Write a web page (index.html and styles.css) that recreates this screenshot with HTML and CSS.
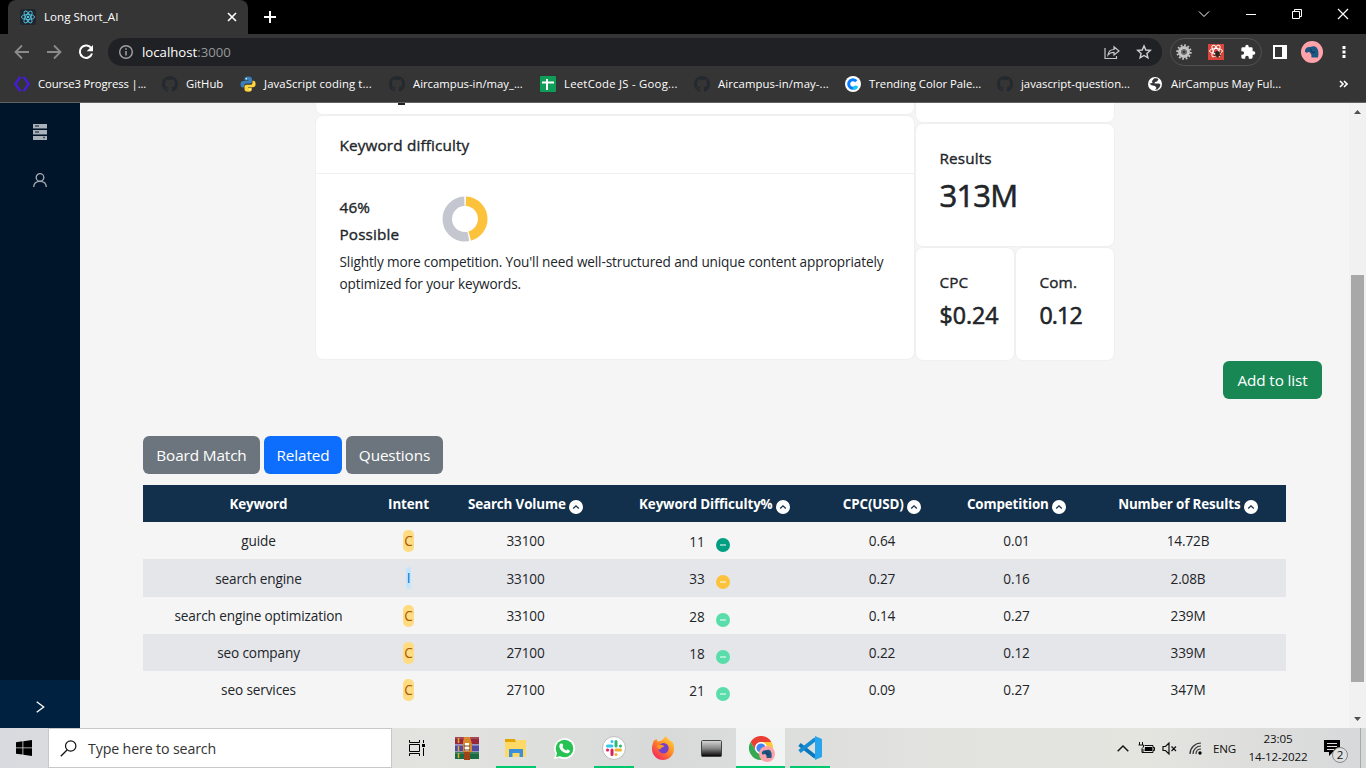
FILE: index.html
```html
<!DOCTYPE html>
<html lang="en">
<head>
<meta charset="utf-8">
<title>Long Short_AI</title>
<link rel="stylesheet" href="styles.css">
</head>
<body>
<svg class="defs" width="0" height="0">
  <symbol id="github" viewBox="0 0 16 16"><path fill="#24292f" d="M8 0C3.58 0 0 3.58 0 8c0 3.54 2.29 6.53 5.47 7.59.4.07.55-.17.55-.38 0-.19-.01-.82-.01-1.49-2.01.37-2.53-.49-2.69-.94-.09-.23-.48-.94-.82-1.13-.28-.15-.68-.52-.01-.53.63-.01 1.08.58 1.23.82.72 1.21 1.87.87 2.33.66.07-.52.28-.87.51-1.07-1.78-.2-3.64-.89-3.64-3.95 0-.87.31-1.59.82-2.15-.08-.2-.36-1.02.08-2.12 0 0 .67-.21 2.2.82.64-.18 1.32-.27 2-.27s1.36.09 2 .27c1.53-1.04 2.2-.82 2.2-.82.44 1.1.16 1.92.08 2.12.51.56.82 1.27.82 2.15 0 3.07-1.87 3.75-3.65 3.95.29.25.54.73.54 1.48 0 1.07-.01 1.93-.01 2.2 0 .21.15.46.55.38A8.01 8.01 0 0 0 16 8c0-4.42-3.58-8-8-8z"/></symbol>
  <symbol id="up" viewBox="0 0 14 14"><circle cx="7" cy="7" r="7" fill="#fff"/><path d="M4.2 8.4 7 5.800l2.800 2.600" fill="none" stroke="#12304b" stroke-width="1.300"/></symbol>
  <symbol id="dot" viewBox="0 0 14 14"><circle cx="7" cy="7" r="7" fill="currentColor"/><path d="M4 7h6" stroke="#fff" stroke-opacity=".5" stroke-width="2"/></symbol>
  <symbol id="elephant" viewBox="0 0 22 22"><circle cx="11" cy="11" r="11" fill="#ffa3aa"/><path d="M4 9.500C4.500 6.500 7 5.500 9.300 6c2.500-1.300 5.500-.8 6.800 1.200 1.500 2.200 1.700 5.300.9 9.300h-6.500l-.2-3-1.500-2c-1-.8-1.800-.6-2.600.2-1.500.3-2.400-.7-2.200-2.200z" fill="#1c5784"/><path d="M9 7.500c1.500 1.200 1 3 3 4.300l2-1" stroke="#142c49" fill="none"/></symbol>
</svg>

<header class="chrome">
  <div class="tabstrip">
    <div class="tab">
      <svg width="16" height="16" viewBox="0 0 16 16"><rect width="16" height="16" rx="2" fill="#20262e"/><g fill="none" stroke="#53c1de" stroke-width=".9"><ellipse cx="8" cy="8" rx="6.600" ry="2.500"/><ellipse cx="8" cy="8" rx="6.600" ry="2.500" transform="rotate(60 8 8)"/><ellipse cx="8" cy="8" rx="6.600" ry="2.500" transform="rotate(120 8 8)"/></g><circle cx="8" cy="8" r="1.300" fill="#53c1de"/></svg>
      <span class="tab-title">Long Short_AI</span>
      <svg width="10" height="10" viewBox="0 0 10 10"><path d="M1 1l8 8M9 1L1 9" stroke="#fff" stroke-width="1.600"/></svg>
    </div>
    <svg class="newtab" width="12" height="12" viewBox="0 0 12 12"><path d="M6 0v12M0 6h12" stroke="#fff" stroke-width="2"/></svg>
    <div class="winctl">
      <svg width="12" height="12" viewBox="0 0 12 12"><path d="M1 3.500l5 5 5-5" fill="none" stroke="#fff"/></svg>
      <svg width="10" height="12" viewBox="0 0 10 12"><path d="M0 6.500h10" stroke="#fff"/></svg>
      <svg width="10" height="12" viewBox="0 0 10 12"><path d="M.5 3.500h7v7h-7zM2.500 3.500v-2h7v7h-2" fill="none" stroke="#fff"/></svg>
      <svg width="12" height="12" viewBox="0 0 12 12"><path d="M1 1l10 10M11 1L1 11" stroke="#fff" stroke-width="1.200"/></svg>
    </div>
  </div>
  <div class="toolbar">
    <svg width="16" height="16" viewBox="0 0 16 16"><path d="M15 8H2M8 1.500L1.500 8 8 14.500" fill="none" stroke="#8b8b8b" stroke-width="1.800"/></svg>
    <svg width="16" height="16" viewBox="0 0 16 16"><path d="M1 8h13M8 1.500L14.500 8 8 14.500" fill="none" stroke="#8b8b8b" stroke-width="1.800"/></svg>
    <svg width="16" height="16" viewBox="0 0 16 16"><path d="M13.400 4.500A6.200 6.200 0 1 0 14 9.500" fill="none" stroke="#fff" stroke-width="2"/><path d="M15 1v6.300H8.700z" fill="#fff"/></svg>
    <div class="omnibox">
      <svg width="14" height="14" viewBox="0 0 14 14"><circle cx="7" cy="7" r="6.300" fill="none" stroke="#a0a3a7" stroke-width="1.400"/><path d="M7 6v4.500M7 3.300v1.500" stroke="#a0a3a7" stroke-width="1.500"/></svg>
      <span class="url">localhost<i>:3000</i></span>
      <svg class="share" width="16" height="16" viewBox="0 0 16 16"><path d="M1 4v10.500h11.500V12M4 11c.5-4 3-5.500 6-5.500V2.700L15 7l-5 4V8.300C7.500 8.300 5.500 9 4 11z" fill="none" stroke="#c4c6c8" stroke-width="1.200"/></svg>
      <svg width="16" height="16" viewBox="0 0 16 16"><path d="M8 1.900l1.800 4.100 4.500.4-3.400 3 1 4.400L8 11.500l-3.900 2.300 1-4.400-3.400-3 4.500-.4z" fill="none" stroke="#d0d1d3" stroke-width="1.400"/></svg>
    </div>
    <div class="extensions">
      <svg width="16" height="16" viewBox="0 0 16 16"><circle cx="8" cy="8" r="6.700" fill="none" stroke="#c4c4c4" stroke-width="2" stroke-dasharray="1.750 1.750"/><circle cx="8" cy="8" r="4.400" fill="none" stroke="#c4c4c4" stroke-width="3.200"/><circle cx="8" cy="8" r="2" fill="none" stroke="#808080"/></svg>
      <svg width="16" height="16" viewBox="0 0 16 16"><path fill="#db4437" d="M0 0h16v16H0z"/><g fill="none" stroke="#fff"><ellipse cx="8" cy="7" rx="6.500" ry="2.500"/><ellipse cx="8" cy="7" rx="6.500" ry="2.500" transform="rotate(60 8 7)"/><ellipse cx="8" cy="7" rx="6.500" ry="2.500" transform="rotate(120 8 7)"/></g><ellipse cx="9.500" cy="10" rx="2.300" ry="3" fill="#33231f"/><path d="M6 8l7 4M6 12l7-4M9 7l1 7" stroke="#33231f"/></svg>
      <svg width="16" height="16" viewBox="0 0 24 24"><path fill="#fff" d="M20.500 11H19V7a2 2 0 0 0-2-2h-4V3.500a2.500 2.500 0 0 0-5 0V5H4a2 2 0 0 0-2 2v3.800h1.500a2.700 2.700 0 0 1 0 5.400H2V20a2 2 0 0 0 2 2h3.800v-1.500a2.700 2.700 0 0 1 5.400 0V22H17a2 2 0 0 0 2-2v-4h1.500a2.500 2.500 0 0 0 0-5z"/></svg>
    </div>
    <svg class="panel" width="14" height="14" viewBox="0 0 14 14"><path d="M1 1h12v12H1z" fill="none" stroke="#fff" stroke-width="2"/><path d="M9 1h4v12H9z" fill="#fff"/></svg>
    <svg class="avatar" width="22" height="22"><use href="#elephant"/></svg>
    <svg width="4" height="14" viewBox="0 0 4 14"><path d="M.5 1h3v3h-3zM.5 5.500h3v3h-3zM.5 10h3v3h-3z" fill="#fff"/></svg>
  </div>
  <nav class="bookmarks">
    <a class="bm w148"><svg width="16" height="16" viewBox="0 0 16 16"><path d="M6.500.8L1.200 8l5.300 7.200M9.500.8L14.800 8l-5.300 7.200" fill="none" stroke="#471bdc" stroke-width="2.300"/></svg><span class="tight">Course3 Progress |...</span></a>
    <a class="bm w78"><svg width="16" height="16"><use href="#github"/></svg>GitHub</a>
    <a class="bm w149"><svg width="16" height="16" viewBox="0 0 16 16"><path fill="#3b7fb8" d="M8 .5C5 .5 4.500 1.500 4.500 3v1.500H8.300V5H3C1.200 5 .5 6.500.5 8.300c0 2 .8 3.200 2.300 3.200h1.500V9.800c0-1.400 1-2.300 2.300-2.300H10c1.200 0 2-.8 2-2V3C12 1.300 10.500.5 8 .5z"/><path fill="#ffd43b" d="M8.300 15.700c3 0 3.500-1 3.500-2.500v-1.500H8V11.200h5c1.800 0 2.600-1.300 2.600-3.200 0-2-.8-3.200-2.300-3.200H12.500v1.700c0 1.400-1 2.300-2.300 2.300H6.500c-1.200 0-2 .8-2 2v2.400c0 1.700 1.300 2.500 3.800 2.500z"/><circle cx="6.300" cy="2.700" r=".8" fill="#fff"/><circle cx="10" cy="13.500" r=".8" fill="#fff"/></svg><span class="loose">JavaScript coding t...</span></a>
    <a class="bm w151"><svg width="16" height="16"><use href="#github"/></svg>Aircampus-in/may_...</a>
    <a class="bm w154"><svg width="16" height="16" viewBox="0 0 16 16"><rect width="16" height="16" rx="1" fill="#0f9d58"/><path d="M2 6.500h12M7 3v11" stroke="#fff" stroke-width="2"/></svg><span class="looser">LeetCode JS - Goog...</span></a>
    <a class="bm w151"><svg width="16" height="16"><use href="#github"/></svg><span class="loose">Aircampus-in/may-...</span></a>
    <a class="bm w152"><svg width="16" height="16" viewBox="0 0 16 16"><circle cx="8" cy="8" r="8" fill="#fff"/><path d="M11.300 5.300a4.300 4.300 0 1 0 0 5.400" fill="none" stroke="#087cff" stroke-width="3"/><path d="M12 10a4.300 4.300 0 0 1-4 2.300" fill="none" stroke="#13c9f5" stroke-width="3"/></svg>Trending Color Pale...</a>
    <a class="bm w150"><svg width="16" height="16"><use href="#github"/></svg>javascript-question...</a>
    <a class="bm w150"><svg width="16" height="16" viewBox="0 0 16 16"><circle cx="8" cy="8" r="7" fill="#fff"/><path fill="#35363a" d="M7 2.500c2-.6 3.500-.3 4.500.7L10 5.500 8 6l-.5 1.500H12l1.500 1-.8 2.500-2.200 2.500-2.500.3L9.500 12 8 10 4.500 9.300 2.500 7.500l3-.5L5 5z"/></svg>AirCampus May Ful...</a>
    <svg class="more" width="9" height="8" viewBox="0 0 9 8"><path d="M1 1l3 3-3 3M5 1l3 3-3 3" fill="none" stroke="#fff" stroke-width="1.600"/></svg>
  </nav>
</header>

<div class="app">
  <aside class="sider">
    <svg width="14" height="16" viewBox="0 0 14 16"><path fill="#a9b1ba" d="M0 0h14v4H0zM0 6h14v4H0zM0 12h14v4H0z"/><path d="M0 4.500h14M0 10.500h14" stroke="#4d5b69"/><path d="M2 2h4M2 8h4M10 13.500h2" stroke="#3c4c5c" stroke-width="1.500"/></svg>
    <svg width="14" height="14" viewBox="0 0 14 14"><circle cx="7" cy="4.400" r="3.800" fill="none" stroke="#a6adb4" stroke-width="1.300"/><path d="M.7 14c.2-3.500 2.300-5.600 6.300-5.600s6.100 2.100 6.300 5.600" fill="none" stroke="#a6adb4" stroke-width="1.300"/></svg>
    <div class="trigger"><svg width="9" height="12" viewBox="0 0 9 12"><path d="M.7.800L7.700 6l-7 5.200" fill="none" stroke="#fff" stroke-width="1.300"/></svg></div>
  </aside>

  <main class="content">
    <section class="overview">
      <div class="left">
        <div class="card cut-left"><span class="glyph-tail"></span></div>
        <div class="card difficulty">
          <h4>Keyword difficulty</h4>
          <div class="body">
            <div class="score">
              <div class="labels"><b>46%</b><b>Possible</b></div>
              <svg width="46" height="46" viewBox="0 0 46 46"><g fill="none" stroke-width="9.500" transform="rotate(-90 23 23)"><circle cx="23" cy="23" r="17.750" stroke="#c4c7cf" pathLength="100" stroke-dasharray="52.500 47.500" stroke-dashoffset="-46.900"/><circle cx="23" cy="23" r="17.750" stroke="#fdc23c" pathLength="100" stroke-dasharray="44.800 55.200" stroke-dashoffset="-.8"/></g></svg>
            </div>
            <p>Slightly more competition. You'll need well-structured and unique content appropriately<br>optimized for your keywords.</p>
          </div>
        </div>
      </div>
      <div class="right">
        <div class="card cut-right"></div>
        <div class="card results"><b>Results</b><strong>313M</strong></div>
        <div class="pair">
          <div class="card small"><b>CPC</b><strong>$0.24</strong></div>
          <div class="card small com"><b>Com.</b><strong>0.12</strong></div>
        </div>
      </div>
    </section>
    <div class="actions"><button class="btn add">Add to list</button></div>
    <div class="tabs"><button class="btn board">Board Match</button><button class="btn related">Related</button><button class="btn questions">Questions</button></div>
    <table class="keywords">
      <colgroup><col class="c1"><col class="c2"><col class="c3"><col class="c4"><col class="c5"><col class="c6"><col class="c7"></colgroup>
      <thead><tr><th>Keyword</th><th>Intent</th><th>Search Volume <svg><use href="#up"/></svg></th><th>Keyword Difficulty% <svg><use href="#up"/></svg></th><th>CPC(USD) <svg><use href="#up"/></svg></th><th>Competition <svg><use href="#up"/></svg></th><th>Number of Results <svg><use href="#up"/></svg></th></tr></thead>
      <tbody>
        <tr><td>guide</td><td><span class="tag c">C</span></td><td>33100</td><td class="kd">11<svg class="teal"><use href="#dot"/></svg></td><td>0.64</td><td>0.01</td><td>14.72B</td></tr>
        <tr class="tall"><td>search engine</td><td><span class="tag i">I</span></td><td>33100</td><td class="kd">33<svg class="amber"><use href="#dot"/></svg></td><td>0.27</td><td>0.16</td><td>2.08B</td></tr>
        <tr><td>search engine optimization</td><td><span class="tag c">C</span></td><td>33100</td><td class="kd">28<svg class="mint"><use href="#dot"/></svg></td><td>0.14</td><td>0.27</td><td>239M</td></tr>
        <tr><td>seo company</td><td><span class="tag c">C</span></td><td>27100</td><td class="kd">18<svg class="mint"><use href="#dot"/></svg></td><td>0.22</td><td>0.12</td><td>339M</td></tr>
        <tr><td>seo services</td><td><span class="tag c">C</span></td><td>27100</td><td class="kd">21<svg class="mint"><use href="#dot"/></svg></td><td>0.09</td><td>0.27</td><td>347M</td></tr>
      </tbody>
    </table>
  </main>

  <div class="scrollbar">
    <svg width="7" height="4" viewBox="0 0 7 4"><path d="M0 4l3.500-4L7 4z" fill="#505050"/></svg>
    <div class="thumb"></div>
    <svg width="7" height="4" viewBox="0 0 7 4"><path d="M0 0l3.500 4L7 0z" fill="#505050"/></svg>
  </div>
</div>

<footer class="taskbar">
  <div class="start"><svg width="16" height="16" viewBox="0 0 16 16"><path d="M0 2.200l6.500-.9v6.200H0zM7.300 1.200L16 0v7.500H7.300zM0 8.300h6.500v6.200L0 13.700zM7.300 8.300H16V16l-8.700-1.200z"/></svg></div>
  <div class="search"><svg width="17" height="17" viewBox="0 0 17 17"><circle cx="10.700" cy="6" r="5.200" fill="none" stroke="#111" stroke-width="1.200"/><path d="M7 10L.8 16.200" stroke="#111" stroke-width="1.300"/></svg><span>Type here to search</span></div>
  <div class="view"><svg width="18" height="16" viewBox="0 0 18 16"><path d="M1.500 0v2.500h10V0M1.500 16v-2.500h10V16M1.500 4.500h10v7h-10zM15.500 0v3M15.500 8v8" fill="none" stroke="#000"/><path d="M14 4h3v3h-3z"/></svg></div>
  <div class="app-icon"><svg width="24" height="24" viewBox="0 0 24 24"><path fill="#96283d" d="M0 1h24v7H0z"/><path fill="#514aa0" d="M0 8.500h24v7H0z"/><path fill="#1a6b41" d="M0 16h24v7H0z"/><path d="M0 2h24M0 9.500h24M0 17h24" stroke="#e9d9d5" stroke-opacity=".35"/><path fill="#d9892b" d="M9 1h6l2 7v8H8V6z"/><path fill="#9e4318" d="M9 16h6v8H9z"/><path fill="#fff" d="M10 7h4v8h-4z"/><path d="M3.500 2v5M3.500 10v5M3.500 17v5" stroke="#e3ab29" stroke-width="1.500"/><path d="M9 10h6M9 14h6" stroke="#6a3e35"/></svg></div>
  <div class="app-icon run"><svg width="22" height="20" viewBox="0 0 22 20"><path fill="#e4a500" d="M0 1h10l1 3H0z"/><path fill="#ffd966" d="M0 4h11l1-2h9v17H0z"/><path fill="#3e8fda" d="M4 11h14v8h-3.500v-4h-7v4H4z"/></svg></div>
  <div class="app-icon"><svg width="21" height="21" viewBox="0 0 21 21"><path fill="#fff" d="M10.500 0a10.500 10.500 0 1 1-5 19.700L0 21l1.500-5.300A10.500 10.500 0 0 1 10.500 0z"/><circle cx="10.500" cy="10.500" r="8.800" fill="#27c352"/><path fill="#27c352" d="M2 19l1.500-5.500L7 18z"/><path fill="#fff" d="M7.200 5.500c.8-.3 1.200 0 1.500.8.5 1.300.9 1.600-.2 2.700.8 1.700 2 2.800 3.700 3.400 1-1.200 1.200-1.200 2.300-.6 1.300.6 1.600.8 1.200 1.900-.8 2-3.400 2-6 .6-2.800-1.500-4.700-4.300-4.400-6.600.2-1.200.9-1.900 1.900-2.200z"/></svg></div>
  <div class="app-icon run"><svg width="24" height="24" viewBox="0 0 24 24"><circle cx="12" cy="12" r="11.500" fill="#fff" stroke="#bbb"/><g fill="none" stroke-width="3" stroke-linecap="round"><path d="M5.500 10H10M10 5.500v.1" stroke="#36c5f0"/><path d="M14 5.500V10M18.500 10h-.1" stroke="#2eb67d"/><path d="M14 14h4.500M14 18.500v-.1" stroke="#ecb22e"/><path d="M10 14v4.500M5.500 14h.1" stroke="#e01e5a"/></g></svg></div>
  <div class="app-icon"><svg width="24" height="24" viewBox="0 0 24 24"><defs><linearGradient id="fx" x1="1" y1="0" x2=".2" y2="1"><stop offset="0" stop-color="#ffe84a"/><stop offset=".5" stop-color="#ff8b22"/><stop offset="1" stop-color="#f32064"/></linearGradient></defs><path fill="url(#fx)" d="M2.500 5l3-2 1 2.500L9 5c2 0 3.500-2.500 6-5 .3 2 3.500 3.200 4.500 5.500l.8-1c2 2 3.200 5 2.700 8.500a11 11 0 0 1-22 0C.8 10 2 7.500 2.500 5z"/><circle cx="12.500" cy="12.200" r="5.200" fill="#7540c9"/><path fill="#ff9a20" d="M6 9.500c3-1.500 5-.8 7.500.5-1.500 1.800-4 1-4 3.500-2 0-3.500-2-3.500-4z"/></svg></div>
  <div class="app-icon"><svg width="21" height="17" viewBox="0 0 21 17"><defs><linearGradient id="term" x2="0" y2="1"><stop stop-color="#d8d8d8"/><stop offset=".5" stop-color="#858585"/><stop offset="1" stop-color="#000"/></linearGradient></defs><rect x=".5" y=".5" width="20" height="16" rx="1" fill="url(#term)" stroke="#444"/></svg></div>
  <div class="app-icon run on"><svg class="chrome-icon" width="26" height="26" viewBox="0 0 26 26"><circle cx="12" cy="12" r="12" fill="#fff"/><path fill="#ea3f33" d="M1.600 6A12 12 0 0 1 22.400 6H12a6 6 0 0 0-5.200 9z"/><path fill="#fcc934" d="M22.400 6A12 12 0 0 1 12 24l5.200-9A6 6 0 0 0 12 6z"/><path fill="#34a853" d="M1.600 6A12 12 0 0 0 12 24l5.200-9a6 6 0 0 1-10.400 0z"/><circle cx="12" cy="12" r="5.700" fill="#fff"/><circle cx="12" cy="12" r="4.600" fill="#4285f4"/><use href="#elephant" x="10" y="10" width="16" height="16"/></svg></div>
  <div class="app-icon run"><svg width="24" height="24" viewBox="0 0 24 24"><path d="M1.500 8.500L17.500 21" stroke="#0877bb" stroke-width="3.800"/><path d="M1.500 15.500L17.500 3" stroke="#168bd0" stroke-width="3.800"/><path fill="#27a5ed" d="M17 0l7 3v18l-7 3z"/></svg></div>
  <div class="tray">
    <svg width="12" height="7" viewBox="0 0 12 7"><path d="M.7 6.300L6 1l5.300 5.300" fill="none" stroke="#111" stroke-width="1.400"/></svg>
    <svg class="battery" width="17" height="12" viewBox="0 0 17 12"><path d="M6.500 3.500H15v7H5V7M15 5.500h1.500v3H15" fill="none" stroke="#111"/><path d="M7 5h7v4H6.500z"/><path d="M1.500 0v3M4.500 0v3M.5 3h5v2L4 6.500v4H6" fill="none" stroke="#111"/></svg>
    <svg class="speaker" width="15" height="13" viewBox="0 0 15 13"><path d="M1 4.500h2.500L7 1v11L3.500 8.500H1zM9.500 4.500l4.500 4.500M14 4.500L9.500 9" fill="none" stroke="#111" stroke-width="1.200"/></svg>
    <svg class="wifi" width="14" height="13" viewBox="0 0 14 13"><g fill="none" stroke="#333" stroke-width="1.200"><path d="M1 12C1 6 6 1 12 1M4 12c0-4.500 3.500-8 8-8M7 12c0-3 2-5 5-5"/></g><circle cx="11" cy="11" r="1.700"/></svg>
    <span class="lang">ENG</span>
    <div class="clock"><span>23:05</span><span>14-12-2022</span></div>
    <div class="notice"><svg width="16" height="16" viewBox="0 0 16 16"><path d="M0 0h16v12H9l-4 4v-4H0z"/><path d="M3 3.500h10M3 6.500h10M3 9.500h7" stroke="#ddd"/></svg><span class="count">2</span></div>
  </div>
</footer>
</body>
</html>
```
FILE: styles.css
```css
* { box-sizing: border-box; }
body { margin: 0; width: 1366px; height: 768px; overflow: hidden; display: flex; flex-direction: column; font-family: "Open Sans", "Noto Sans", sans-serif; font-size: 13.6px; letter-spacing: -.13px; color: #212529; }
svg { display: block; flex: none; }
.defs { position: absolute; }

/* Browser frame */
.chrome { height: 103px; flex: none; background: #353535; border-bottom: 1px solid #626262; color: #fff; letter-spacing: 0; }
.tabstrip { height: 34px; background: #000; display: flex; align-items: center; }
.tab { width: 240px; height: 34px; margin-left: 8px; padding: 0 11px 0 12px; background: #353535; border-radius: 8px 8px 0 0; display: flex; align-items: center; gap: 8px; }
.tab-title { flex: 1; font-size: 11.6px; padding-bottom: 2px; }
.newtab { margin-left: 16px; }
.winctl { margin-left: auto; margin-right: 17px; margin-bottom: 6px; display: flex; gap: 35px; }
.winctl svg:first-child { margin-right: 1px; }
.winctl svg:nth-child(2) { margin-right: 1px; }
.toolbar { height: 36px; display: flex; align-items: center; padding-left: 14px; gap: 16px; }
.omnibox { width: 1054px; height: 28px; margin-left: -2px; background: #202124; border-radius: 14px; display: flex; align-items: center; padding: 0 10px 0 11px; }
.url { margin-left: 9px; font-size: 13.2px; flex: 1; }
.url i { font-style: normal; color: #96989b; }
.share { margin-right: 16px; }
.extensions { width: 92px; height: 28px; margin-left: -8px; border: 1px solid #505152; border-radius: 14px; display: flex; align-items: center; gap: 16px; padding-left: 5px; }
.panel { margin-left: -5px; }
.avatar { margin-left: -2px; }
.avatar + svg { margin-left: 3px; }
.bookmarks { height: 32px; padding: 0 0 5px 14px; display: flex; align-items: center; }
.bm { display: flex; align-items: center; gap: 8px; font-size: 11.3px; white-space: nowrap; }
.tight { letter-spacing: -.12px; }
.loose { letter-spacing: .12px; }
.looser { letter-spacing: .26px; }
.w78 { width: 78px; }
.w148 { width: 148px; }
.w149 { width: 149px; }
.w150 { width: 150px; }
.w151 { width: 151px; }
.w152 { width: 152px; }
.w154 { width: 154px; }
.more { margin-left: 42px; }

/* Page */
.app { flex: 1; min-height: 0; display: flex; background: #f5f5f5; }
.sider { width: 80px; background: #001529; display: flex; flex-direction: column; align-items: center; padding-top: 21px; gap: 33px; }
.trigger { width: 80px; height: 48px; margin-top: auto; background: #002140; display: flex; align-items: center; justify-content: center; padding-top: 6px; }
.content { width: 1269px; height: 625px; overflow: hidden; }
.overview { display: flex; margin-left: 235px; }
.left { width: 600px; }
.right { width: 200px; }
.card { background: #fff; border: 1px solid #f0f0f0; border-radius: 8px; }
.cut-left { height: 12px; border-top: 0; border-radius: 0 0 8px 8px; }
.cut-right { height: 20px; border-top: 0; border-radius: 0 0 8px 8px; }
.glyph-tail { display: block; width: 7px; height: 2px; margin-left: 82px; background: #222; }
.card b, .difficulty h4 { display: block; font-weight: 400; font-size: 15.3px; line-height: 24px; letter-spacing: .14px; -webkit-text-stroke: .35px #212529; }
.difficulty { height: 245px; }
.difficulty h4 { margin: 0; height: 58px; padding: 0 23.5px; border-bottom: 1px solid #f0f0f0; line-height: 58px; }
.body { padding: 21px 23.5px; }
.score { display: flex; height: 56px; }
.labels { width: 102px; }
.card .labels b { line-height: 27px; margin-top: -1px; margin-bottom: 1px; }
.score svg { margin-top: 1px; }
.difficulty p { margin: 0; line-height: 22px; white-space: nowrap; }
.results { height: 124px; padding: 22px 23.5px; }
.card strong { display: block; font-weight: 400; white-space: nowrap; -webkit-text-stroke: .6px #212529; }
.results strong { font-size: 31px; line-height: 40px; margin-top: 5px; letter-spacing: -.8px; }
.pair { display: flex; }
.small { width: 100px; height: 114px; padding: 22px 0 0 23.5px; }
.small strong { font-size: 23.2px; line-height: 32px; margin-top: 5px; letter-spacing: 0; }
.com strong { letter-spacing: -.9px; }
.btn { height: 38px; border: 0; border-radius: 6px; color: #fff; font: 15.3px "Open Sans", sans-serif; letter-spacing: -.12px; padding: 0; white-space: nowrap; }
.actions { padding-left: 1143px; }
.add { width: 99px; background: #198754; display: block; }
.tabs { display: flex; gap: 4px; margin: 37px 0 11px 63px; }
.board { width: 117px; background: #6c757d; }
.related { width: 78px; background: #0d6efd; }
.questions { width: 97px; background: #6c757d; }

/* Keyword table */
.keywords { width: 1143px; margin-left: 63px; table-layout: fixed; border-collapse: collapse; text-align: center; }
.c1 { width: 231px; }
.c2 { width: 69px; }
.c3 { width: 165px; }
.c4 { width: 213px; }
.c5 { width: 122px; }
.c6 { width: 147px; }
.c7 { width: 196px; }
.keywords tr { height: 37px; }
.keywords .tall { height: 38px; }
.keywords th { padding: 0; background: #12304b; color: #fff; font-size: 13.4px; font-weight: 700; white-space: nowrap; }
.keywords th:nth-child(n+3) { padding-top: 2px; }
.keywords td { padding: 0; white-space: nowrap; }
.keywords tbody tr:nth-child(even) { background: #e5e6ea; }
.keywords svg { display: inline-block; width: 14px; height: 14px; vertical-align: -5px; }
.keywords .kd { padding: 2px 10px 0 0; }
.keywords .tall .kd { padding-top: 1px; }
.kd svg { margin-left: 11px; }
.teal { color: #009f81; }
.amber { color: #fdc23c; }
.mint { color: #59ddaa; }
.tag { display: inline-block; height: 22px; line-height: 22px; border-radius: 5px; padding: 0 1px; vertical-align: middle; }
.tag.c { background: #ffdc81; color: #a75800; }
.tag.i { background: #c4e5fe; color: #006dca; }

/* Scrollbar */
.scrollbar { width: 17px; background: #f1f1f1; display: flex; flex-direction: column; align-items: center; justify-content: space-between; padding: 7px 0 7px; }
.thumb { width: 13px; height: 407px; background: #a8a8a8; margin-top: 125px; }

/* Taskbar */
.taskbar { height: 40px; flex: none; display: flex; background: linear-gradient(90deg, #d8dadf 0, #e3e4df 32%, #d8dada 48%, #e2e3df 68%, #e4e5df 84%, #d7d8da 100%); }
.start { width: 48px; display: flex; align-items: center; justify-content: center; }
.search { width: 344px; background: #fff; border: 1px solid #c8c8c8; display: flex; align-items: center; gap: 11px; padding-left: 11px; font-size: 14.2px; color: #333; }
.view { width: 50px; display: flex; align-items: center; justify-content: center; }
.app-icon { width: 49px; display: flex; align-items: center; justify-content: center; background-repeat: no-repeat; background-position: 50% 100%; }
.run { background-image: linear-gradient(#00c86c, #00c86c); background-size: 40px 2px; }
.on { background-color: #f2f3f3; background-size: 49px 2px; }
.chrome-icon { margin: 2px 0 0 2px; }
.tray { flex: 1; display: flex; align-items: center; padding-left: 283px; color: #111; font-size: 11.6px; letter-spacing: -.15px; }
.battery { margin-left: 9px; }
.speaker { margin-left: 7px; }
.wifi { margin-left: 12px; }
.lang { margin-left: 10px; width: 24px; }
.clock { width: 60px; margin-left: 11px; display: flex; flex-direction: column; align-items: center; line-height: 18px; white-space: nowrap; }
.notice { margin-left: 16px; width: 37px; height: 40px; padding-top: 12px; border-right: 1px solid #aaa; position: relative; }
.count { position: absolute; left: 8px; top: 19px; width: 16px; height: 16px; border-radius: 8px; border: 1px solid #888; background: #dedfdf; line-height: 14px; text-align: center; }
```
